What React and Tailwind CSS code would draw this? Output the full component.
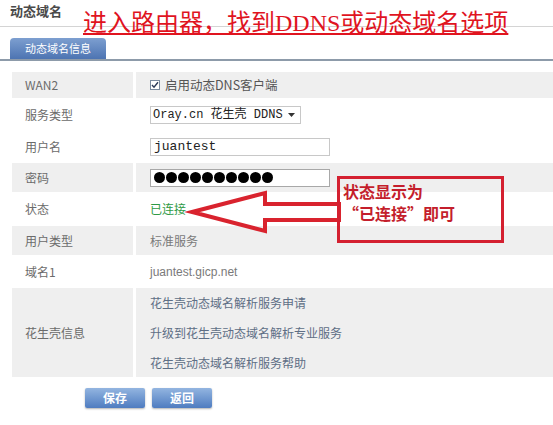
import React from "react";

const CJK = '"Noto Sans CJK SC", "Noto Sans", sans-serif';

function Row({ bg, h, label, children, labelClass = "" }) {
  return (
    <div className={`flex ${h}`}>
      <div className={`w-[121px] shrink-0 ${bg} flex items-center pl-[13px] text-[12px] text-[#6b6b6b] ${labelClass}`}>
        {label}
      </div>
      <div className="w-[3px] shrink-0 bg-white" />
      <div className={`flex-1 ${bg} flex items-center pl-[14px]`}>{children}</div>
    </div>
  );
}

export default function App() {
  return (
    <div
      className="relative w-[553px] h-[425px] overflow-hidden bg-white"
      style={{ fontFamily: CJK }}
    >
      {/* header */}
      <div className="h-[27px] pl-[10px] flex items-center border-b border-[#d4d4d4]">
        <span className="text-[13px] font-bold text-[#4a4a4a] -mt-[4px]">动态域名</span>
      </div>

      {/* tab bar */}
      <div className="mt-[11px] pl-[10px] border-b-2 border-[#8d9baa] flex">
        <div className="w-[96px] h-[21px] rounded-t-[4px] bg-gradient-to-b from-[#7d9fd0] to-[#4d74b2] flex items-center justify-center text-white text-[11px]">
          动态域名信息
        </div>
      </div>

      {/* table */}
      <div className="mt-[11px] ml-[12px] flex flex-col">
        <Row bg="bg-[#efefef]" h="h-[26px]" label="WAN2">
          <div className="flex items-center gap-[5px] text-[12.5px] text-[#555]">
            <div className="w-[10px] h-[10px] border border-[#7a8a9e] bg-white flex items-center justify-center">
              <svg width="8" height="8" viewBox="0 0 8 8">
                <path d="M1 4 L3 6.2 L7 1.2" fill="none" stroke="#2b3a57" strokeWidth="1.4" />
              </svg>
            </div>
            <span>启用动态DNS客户端</span>
          </div>
        </Row>
        <Row bg="bg-white" h="h-[33px]" label="服务类型">
          <div className="h-[18px] w-[151px] border border-[#c8c8c8] flex items-center pl-[2px] pr-[5px] justify-between text-[12px] text-[#222] whitespace-nowrap" style={{ fontFamily: '"Liberation Mono", "Noto Sans CJK SC", monospace' }}>
            <span>Oray.cn 花生壳 DDNS</span>
            <svg width="7" height="4" viewBox="0 0 7 4"><path d="M0 0 L7 0 L3.5 4 Z" fill="#333" /></svg>
          </div>
        </Row>
        <Row bg="bg-white" h="h-[32px]" label="用户名">
          <div className="h-[18px] w-[180px] border border-[#c8c8c8] flex items-center pl-[3px] text-[13px] text-[#222]" style={{ fontFamily: '"Liberation Mono", monospace' }}>
            juantest
          </div>
        </Row>
        <Row bg="bg-[#efefef]" h="h-[29px]" label="密码">
          <div className="h-[18px] w-[180px] border border-[#a8a8a8] bg-white flex items-center pl-[3px] gap-[1.5px]">
            {Array.from({ length: 10 }).map((_, i) => (
              <div key={i} className="w-[10.5px] h-[10.5px] rounded-full bg-black" />
            ))}
          </div>
        </Row>
        <Row bg="bg-white" h="h-[34px]" label="状态">
          <span className="text-[12px] text-[#2e9a45]">已连接</span>
        </Row>
        <Row bg="bg-[#efefef]" h="h-[29px]" label="用户类型">
          <span className="text-[12px] text-[#7a7a7a]">标准服务</span>
        </Row>
        <Row bg="bg-white" h="h-[33px]" label="域名1">
          <span className="text-[12px] text-[#7a7a7a]" style={{ fontFamily: '"Liberation Sans", sans-serif' }}>juantest.gicp.net</span>
        </Row>
        <Row bg="bg-[#efefef]" h="h-[89px]" label="花生壳信息">
          <div className="flex flex-col gap-[12px] text-[12px] text-[#5e6e85] leading-[18px]">
            <span>花生壳动态域名解析服务申请</span>
            <span>升级到花生壳动态域名解析专业服务</span>
            <span>花生壳动态域名解析服务帮助</span>
          </div>
        </Row>
      </div>

      {/* buttons */}
      <div className="mt-[11px] ml-[85px] flex gap-[7px]">
        <div className="w-[60px] h-[20px] rounded-[2px] bg-gradient-to-b from-[#93b5e0] to-[#4f7cc0] shadow-[0_1px_2px_rgba(0,0,0,0.3)] flex items-center justify-center text-white text-[12px] font-bold">
          保存
        </div>
        <div className="w-[60px] h-[20px] rounded-[2px] bg-gradient-to-b from-[#93b5e0] to-[#4f7cc0] shadow-[0_1px_2px_rgba(0,0,0,0.3)] flex items-center justify-center text-white text-[12px] font-bold">
          返回
        </div>
      </div>

      {/* annotation: title */}
      <div
        className="absolute left-[83px] top-[8px] text-[24px] leading-[30px] text-[#e0141f] underline decoration-[1.5px] underline-offset-[2px] whitespace-nowrap"
        style={{ fontFamily: '"Liberation Serif", "Noto Sans CJK SC", serif' }}
      >
        进入路由器，找到DDNS或动态域名选项
      </div>

      {/* annotation: arrow */}
      <svg className="absolute left-0 top-0" width="553" height="425" viewBox="0 0 553 425">
        <polygon
          points="192,212 265,193 265,204 339,204 339,220 265,220 265,231"
          fill="none"
          stroke="#d9232e"
          strokeWidth="4"
          strokeLinejoin="miter"
        />
      </svg>

      {/* annotation: box */}
      <div className="absolute left-[337px] top-[176px] w-[167px] h-[67px] border-[3px] border-[#d42030] pl-[3px] pt-[1px] text-[16px] font-bold leading-[22px] text-[#c41e2c]">
        <div>状态显示为</div>
        <div>“已连接”即可</div>
      </div>
    </div>
  );
}
